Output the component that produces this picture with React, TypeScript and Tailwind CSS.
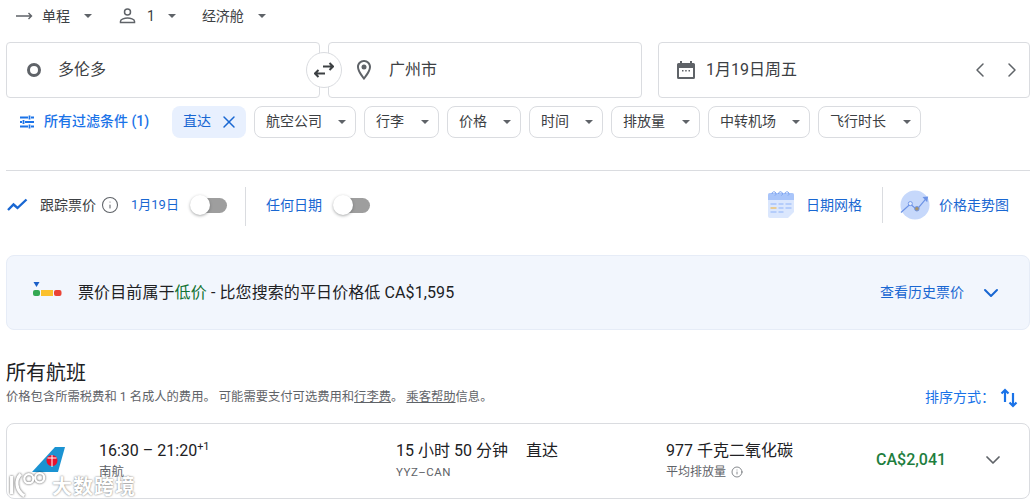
import React from 'react';
import { ChevronDown, ChevronLeft, ChevronRight, Info, X } from 'lucide-react';

const filters = [
  { label: '航空公司', width: 'w-[102px]' },
  { label: '行李', width: 'w-[75px]' },
  { label: '价格', width: 'w-[74px]' },
  { label: '时间', width: 'w-[74px]' },
  { label: '排放量', width: 'w-[89px]' },
  { label: '中转机场', width: 'w-[102px]' },
  { label: '飞行时长', width: 'w-[103px]' },
];

const Caret = ({ className = '' }: { className?: string }) => (
  <span className={`w-0 h-0 border-x-[4px] border-x-transparent border-t-[4px] border-t-[#5f6368] ${className}`}></span>
);

const Toggle = () => (
  <div className="relative w-[35px] h-[15px] rounded-full bg-[#9e9e9e]">
    <div className="absolute left-[-2px] top-[-3px] w-[20px] h-[20px] rounded-full bg-white shadow-[0_1px_3px_rgba(60,64,67,0.45)]"></div>
  </div>
);

const App = () => {
  return (
    <div className="relative w-[1036px] h-[504px] overflow-hidden bg-white px-[6px] text-[#3c4043] font-['Roboto','Noto_Sans_CJK_SC',sans-serif]">
      {/* Trip options */}
      <div className="flex items-center h-[32px] pl-[10px] text-[14px]">
        <svg width="17" height="10" viewBox="0 0 17 10" fill="none" stroke="#5f6368" strokeWidth="1.4">
          <path d="M0 5h15.500M12.500 2l3 3-3 3" />
        </svg>
        <span className="ml-[9px]">单程</span>
        <Caret className="ml-[14px]" />
        <svg width="17" height="16" viewBox="0 0 17 16" fill="none" stroke="#5f6368" strokeWidth="1.5" className="ml-[27px]">
          <circle cx="8.500" cy="4" r="3" />
          <path d="M1.500 14.500v-1.200c0-2 4.200-3.300 7-3.300s7 1.300 7 3.300v1.200z" />
        </svg>
        <span className="ml-[11px]">1</span>
        <Caret className="ml-[13px]" />
        <span className="ml-[26px]">经济舱</span>
        <Caret className="ml-[14px]" />
      </div>

      {/* Search fields */}
      <div className="flex mt-[10px] h-[56px]">
        <div className="relative flex items-center w-[314px] border border-[#dadce0] rounded-[4px] pl-[20px] text-[16px]">
          <span className="w-[14px] h-[14px] rounded-full border-[3px] border-[#5f6368]"></span>
          <span className="ml-[17px]">多伦多</span>
          <div className="absolute z-10 right-[-23px] top-[9px] flex items-center justify-center w-[36px] h-[36px] rounded-full border border-[#dadce0] bg-white">
            <svg width="20" height="16" viewBox="0 0 20 16" fill="none" stroke="#3c4043" strokeWidth="2">
              <path d="M9 4.500h10M15.500 1l3.500 3.500L15.500 8" />
              <path d="M11 11.500H1M4.500 8L1 11.500 4.500 15" />
            </svg>
          </div>
        </div>
        <div className="flex items-center w-[314px] ml-[8px] border border-[#dadce0] rounded-[4px] pl-[23px] text-[16px]">
          <svg width="24" height="24" viewBox="0 0 24 24" fill="#5f6368">
            <path d="M12 2C8.130 2 5 5.130 5 9c0 5.250 7 13 7 13s7-7.750 7-13c0-3.870-3.130-7-7-7zm0 2c2.760 0 5 2.240 5 5 0 2.880-2.880 7.190-5 9.880C9.920 16.210 7 11.850 7 9c0-2.760 2.240-5 5-5z" />
            <circle cx="12" cy="9" r="2.500" />
          </svg>
          <span className="ml-[13px]">广州市</span>
        </div>
        <div className="flex items-center w-[372px] ml-[16px] border border-[#dadce0] rounded-[4px] pl-[17px] pr-[5px] text-[16px]">
          <svg width="20" height="20" viewBox="0 0 20 20" fill="#5f6368">
            <path d="M4 1h2v2h8V1h2v2h1.500A1.500 1.500 0 0 1 19 4.500v13a1.500 1.500 0 0 1-1.500 1.500h-15A1.500 1.500 0 0 1 1 17.500v-13A1.500 1.500 0 0 1 2.500 3H4V1zM3 8v9h14V8H3z" />
            <path d="M6 10h1.500v1.500H6zM9.200 10h1.500v1.500H9.200zM12.500 10H14v1.500h-1.500z" />
          </svg>
          <span className="ml-[10px]">1月19日周五</span>
          <ChevronLeft size={24} strokeWidth={1.5} className="ml-auto text-[#5f6368]" />
          <ChevronRight size={24} strokeWidth={1.5} className="ml-[8px] text-[#5f6368]" />
        </div>
      </div>

      {/* Filters */}
      <div className="flex items-center mt-[8px] h-[32px] text-[14px]">
        <div className="flex items-center w-[166px] pl-[13px] text-[#1a73e8] font-medium">
          <svg width="16" height="16" viewBox="0 0 16 16" stroke="#1a73e8" strokeWidth="1.8" fill="none">
            <path d="M1 3.500h8M12 3.500h3M1 8h2M6 8h9M1 12.500h8M12 12.500h3M10.500 1.500v4M4.500 6v4M10.500 10.500v4" />
          </svg>
          <span className="ml-[9px] whitespace-nowrap pb-[1px]">所有过滤条件 (1)</span>
        </div>
        <div className="flex items-center w-[74px] h-[32px] rounded-[8px] bg-[#e8f0fe] pl-[11px] text-[#1967d2]">
          <span className="pb-[1px]">直达</span>
          <X size={20} strokeWidth={1.75} className="ml-[8px]" />
        </div>
        <div className="flex gap-[8px] ml-[8px]">
          {filters.map((filter) => (
            <div key={filter.label} className={`flex items-center justify-between h-[32px] ${filter.width} border border-[#dadce0] rounded-[8px] pl-[11px] pr-[9px]`}>
              <span className="pb-[1px]">{filter.label}</span>
              <Caret />
            </div>
          ))}
        </div>
      </div>

      <div className="mt-[32px] border-t border-[#dadce0]"></div>

      {/* Price tracking */}
      <div className="flex items-center mt-[14px] h-[40px] text-[14px]">
        <svg width="24" height="24" viewBox="0 0 24 24" fill="none" stroke="#1967d2" strokeWidth="2.4">
          <path d="M2 17l5.500-5.500 4 3.500 9-8.500" />
        </svg>
        <span className="ml-[10px]">跟踪票价</span>
        <Info size={18} strokeWidth={1.4} className="ml-[5px] text-[#5f6368]" />
        <span className="ml-[12px] text-[13px] text-[#1967d2]">1月19日</span>
        <div className="ml-[13px]"><Toggle /></div>
        <div className="self-start mt-[2px] ml-[18px] w-px h-[39px] bg-[#dadce0]"></div>
        <span className="ml-[20px] text-[#1967d2]">任何日期</span>
        <div className="ml-[13px]"><Toggle /></div>

        <div className="ml-auto flex items-center self-stretch">
          <svg width="26" height="28" viewBox="0 0 26 28" className="mr-[12px]">
            <path d="M0 4a2 2 0 0 1 2-2h22a2 2 0 0 1 2 2v17l-6 6H2a2 2 0 0 1-2-2z" fill="#dbe7fd" />
            <path d="M0 4a2 2 0 0 1 2-2h22a2 2 0 0 1 2 2v5H0z" fill="#a9c5fa" />
            <path d="M4 3a2 2 0 1 1 3 1.500M10.500 3a2 2 0 1 1 3 1.500M17 3a2 2 0 1 1 3 1.500" fill="none" stroke="#7ba2ef" strokeWidth="1" />
            <path d="M2.500 13h6" stroke="#a9c5fa" strokeWidth="1.6" />
            <path d="M2.500 17h6" stroke="#eac579" strokeWidth="1.6" />
            <path d="M2.500 21h6M10.500 13h5M10.500 17h5M10.500 21h5M17.500 13h6M17.500 17h6" stroke="#a9c5fa" strokeWidth="1.6" />
          </svg>
          <span className="text-[#1967d2]">日期网格</span>
          <div className="self-start mt-[2px] ml-[20px] w-px h-[36px] bg-[#dadce0]"></div>
          <svg width="30" height="30" viewBox="0 0 32 32" className="ml-[17px] mr-[9px]">
            <circle cx="16" cy="16" r="15.500" fill="#c6d8fb" />
            <path d="M1 24l10-9 7 6 10-12" fill="none" stroke="#6d93e6" strokeWidth="1.300" />
            <path d="M24 7.500l6-.5-1 6z" fill="#6d93e6" />
            <circle cx="11" cy="14.500" r="2.200" fill="#e3ecfd" stroke="#6d93e6" />
            <circle cx="18" cy="20" r="2.400" fill="#a8946a" stroke="#6d93e6" />
          </svg>
          <span className="mr-[21px] text-[#1967d2]">价格走势图</span>
        </div>
      </div>

      {/* Price insight */}
      <div className="flex items-center mt-[30px] h-[75px] rounded-[8px] border border-[#e6ecf7] bg-[#f2f6fd] pl-[26px] pr-[26px]">
        <svg width="30" height="18" viewBox="0 0 30 18" className="mt-[-3px]">
          <path d="M0.500 0h6l-3 5z" fill="#1a5fc8" />
          <rect x="0" y="8" width="7" height="6" rx="2" fill="#34a853" />
          <rect x="8" y="8" width="12" height="6" fill="#fbc02d" />
          <rect x="21" y="8" width="7.500" height="6" rx="2" fill="#ea4335" />
        </svg>
        <span className="ml-[15px] text-[16px] tracking-[0.1px] text-[#202124]">
          票价目前属于<span className="text-[#137333]">低价</span> - 比您搜索的平日价格低 CA$1,595
        </span>
        <span className="ml-auto text-[14px] text-[#1967d2]">查看历史票价</span>
        <ChevronDown size={24} strokeWidth={2} className="ml-[15px] text-[#1967d2]" />
      </div>

      {/* Flights header */}
      <h2 className="mt-[29px] text-[20px] leading-[28px] text-[#202124]">所有航班</h2>
      <div className="flex items-center h-[20px] text-[12.3px] text-[#5f6368]">
        <span>
          价格包含所需税费和 1 名成人的费用。 可能需要支付可选费用和<span className="underline">行李费</span>。 <span className="underline">乘客帮助</span>信息。
        </span>
        <span className="ml-auto text-[14px] text-[#1a73e8]">排序方式：</span>
        <svg width="18" height="20" viewBox="0 0 18 20" fill="none" stroke="#1a73e8" strokeWidth="2.200" className="ml-[5px] mr-[12px] mt-[2px]">
          <path d="M5 14V2M1.500 5.500L5 2l3.500 3.500" />
          <path d="M13 5v13M9.500 14.500L13 18l3.500-3.500" />
        </svg>
      </div>

      {/* Flight card */}
      <div className="flex items-center mt-[16px] h-[76px] pb-[2px] rounded-[8px] border border-[#dadce0]">
        <div className="relative w-[92px] h-full shrink-0">
          <svg width="36" height="28" viewBox="0 0 36 28" className="absolute left-[25px] top-[23px]">
            <path d="M23 0h10l-7 25H0z" fill="#1b93d2" />
            <circle cx="20" cy="13.500" r="5.500" fill="#e8112d" />
            <path d="M15.500 11h9M20 8v12" stroke="#fff" strokeWidth="1" />
          </svg>
        </div>
        <div className="w-[297px] shrink-0">
          <div className="text-[16px] leading-[20px] text-[#202124]">
            16:30 – 21:20<sup className="text-[11px]">+1</sup>
          </div>
          <div className="mt-[3px] text-[12.5px] leading-[16px] text-[#5f6368]">南航</div>
        </div>
        <div className="w-[130px] shrink-0">
          <div className="text-[16px] leading-[20px] text-[#202124]">15 小时 50 分钟</div>
          <div className="mt-[3px] text-[11.5px] leading-[16px] tracking-[0.5px] text-[#5f6368]">YYZ–CAN</div>
        </div>
        <div className="w-[140px] shrink-0 self-start mt-[17px] text-[16px] leading-[20px] text-[#202124]">直达</div>
        <div className="w-[210px] shrink-0">
          <div className="text-[16px] leading-[20px] text-[#202124]">977 千克二氧化碳</div>
          <div className="flex items-center mt-[3px] text-[12px] leading-[16px] text-[#5f6368]">
            平均排放量
            <Info size={12} strokeWidth={1.5} className="ml-[5px]" />
          </div>
        </div>
        <span className="text-[16px] font-medium text-[#1e7e3e]">CA$2,041</span>
        <ChevronDown size={24} strokeWidth={1.75} className="ml-[35px] text-[#5f6368]" />
      </div>

      {/* Watermark */}
      <div className="absolute left-[8px] top-[468px] flex items-center text-[20px] font-bold tracking-[1px] text-white [text-shadow:0_0_2px_rgba(0,0,0,0.6)]">
        <svg width="38" height="30" viewBox="0 0 42 32" fill="none" stroke="#fff" strokeWidth="3.500" className="drop-shadow-[0_0_1px_rgba(0,0,0,0.7)]">
          <path d="M4 6v20M14 4c-6 6-6 18 4 24" />
          <circle cx="23" cy="9" r="5" strokeWidth="2.500" />
          <circle cx="35" cy="8" r="5" strokeWidth="2.500" />
        </svg>
        <span className="ml-[6px] mt-[4px]">大数跨境</span>
      </div>
    </div>
  );
};

export default App;
